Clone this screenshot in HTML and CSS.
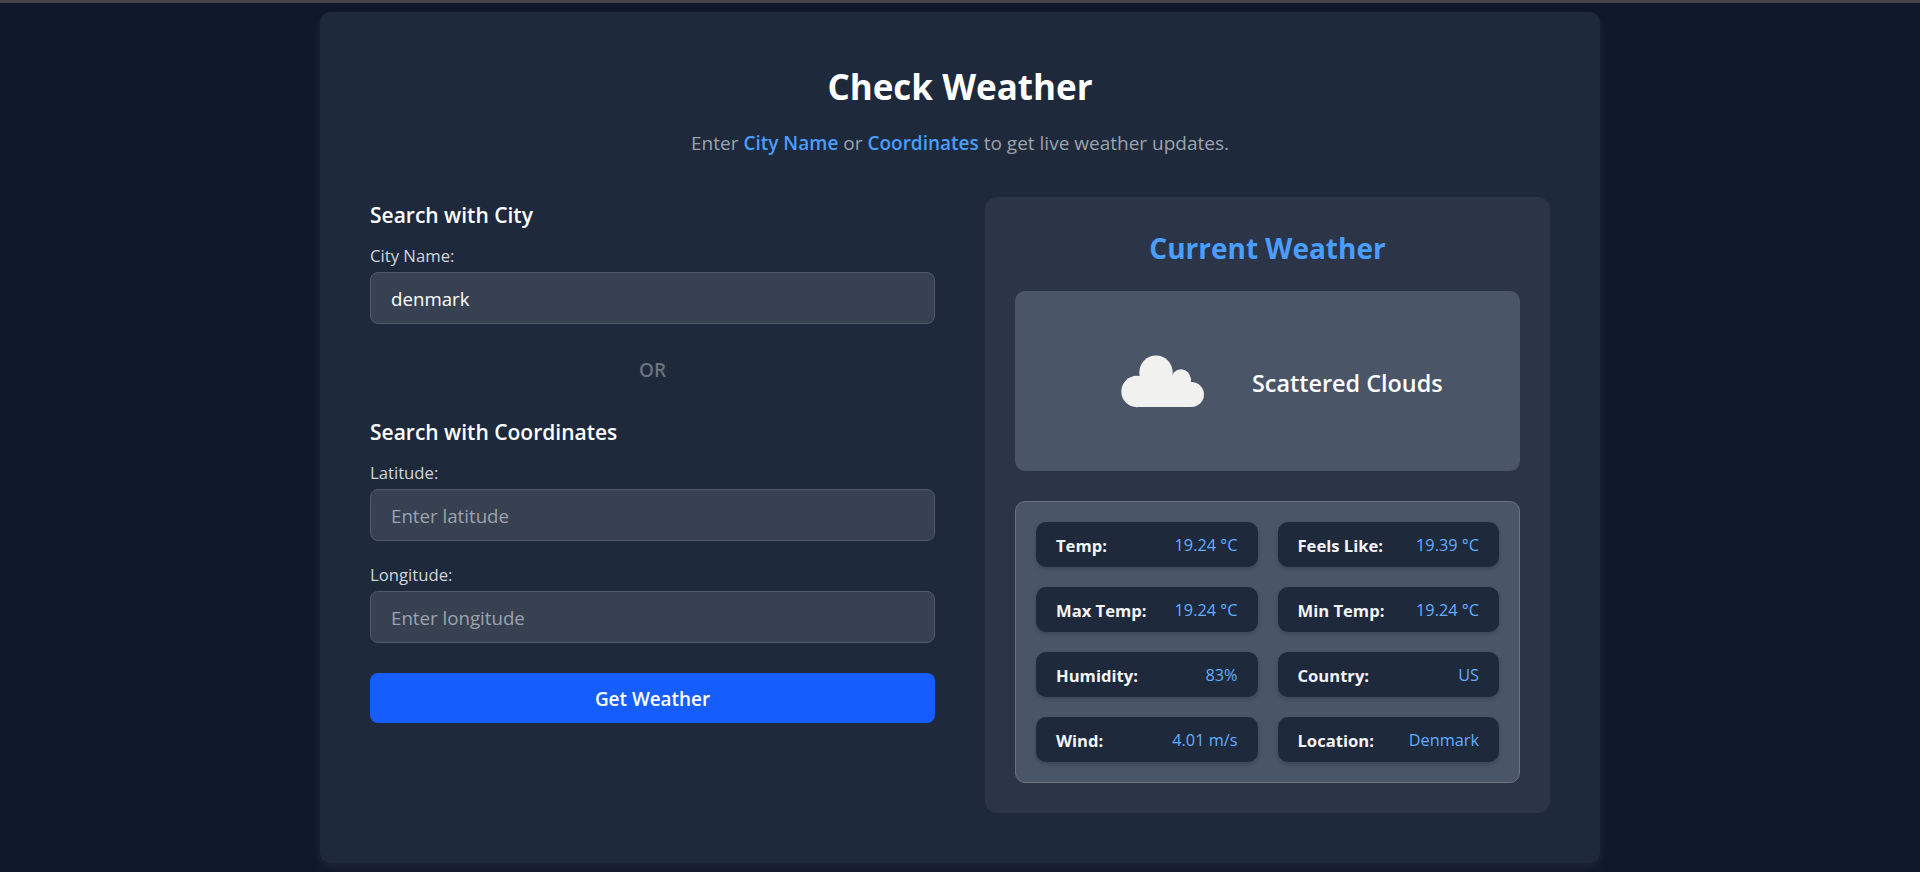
FILE: index.html
```html
<!DOCTYPE html>
<html lang="en">
<head>
    <meta charset="utf-8">
    <title>Check Weather</title>
    <link rel="stylesheet" href="styles.css">
</head>
<body>
    <div class="container">
        <h1 class="title">Check Weather</h1>
        <p class="subtitle">Enter <b>City Name</b> or <b>Coordinates</b> to get live weather updates.</p>

        <div class="columns">
            <form class="search">
                <h3>Search with City</h3>
                <label for="city">City Name:</label>
                <input type="text" id="city" value="denmark">

                <p class="or">OR</p>

                <h3>Search with Coordinates</h3>
                <label for="lat">Latitude:</label>
                <input type="text" id="lat" placeholder="Enter latitude">
                <label for="lon" class="second">Longitude:</label>
                <input type="text" id="lon" placeholder="Enter longitude">

                <button type="button" class="btn">Get Weather</button>
            </form>

            <div class="weather">
                <h2>Current Weather</h2>
                <div class="summary">
                    <svg class="cloud" width="100" height="100" viewBox="0 0 100 100">
                        <g fill="#f1f1ef">
                            <circle cx="43" cy="41.3" r="16.7"/>
                            <circle cx="68" cy="48" r="9.7"/>
                            <circle cx="24" cy="60.5" r="15.7"/>
                            <circle cx="78.5" cy="63.5" r="12.5"/>
                            <rect x="24" y="46" width="54" height="30" rx="2"/>
                        </g>
                    </svg>
                    <span class="desc">Scattered Clouds</span>
                </div>
                <div class="details">
                    <div class="item"><strong>Temp:</strong><span>19.24 °C</span></div>
                    <div class="item"><strong>Feels Like:</strong><span>19.39 °C</span></div>
                    <div class="item"><strong>Max Temp:</strong><span>19.24 °C</span></div>
                    <div class="item"><strong>Min Temp:</strong><span>19.24 °C</span></div>
                    <div class="item"><strong>Humidity:</strong><span>83%</span></div>
                    <div class="item"><strong>Country:</strong><span>US</span></div>
                    <div class="item"><strong>Wind:</strong><span>4.01 m/s</span></div>
                    <div class="item"><strong>Location:</strong><span>Denmark</span></div>
                </div>
            </div>
        </div>
    </div>
</body>
</html>
```

FILE: styles.css
```css
* {
    box-sizing: border-box;
}

body {
    margin: 0;
    height: 872px;
    overflow: hidden;
    background-color: #0f172a;
    border-top: 3px solid #444444;
    color: #fff;
    font-family: "Open Sans", "Noto Sans", sans-serif;
    font-stretch: 90%;
}

.container {
    width: 1280px;
    height: 851px;
    margin: 9px auto 0;
    padding: 50px;
    background-color: #1e293b;
    border-radius: 10px;
    box-shadow: 0 4px 12px rgba(255, 255, 255, 0.07);
}

.title {
    margin: 0;
    font-size: 35px;
    line-height: 50px;
    font-weight: 700;
    text-align: center;
}

.subtitle {
    margin: 19px 0 41px;
    font-size: 19px;
    line-height: 25px;
    color: #9ca3af;
    text-align: center;
}

.subtitle b {
    color: #4a9eff;
    font-weight: 600;
}

.columns {
    display: grid;
    grid-template-columns: 1fr 1fr;
    gap: 50px;
}

.search h3 {
    margin: 0 0 12px;
    font-size: 21px;
    line-height: 36px;
    font-weight: 600;
}

.search label {
    display: block;
    margin-bottom: 5px;
    font-size: 16.7px;
    line-height: 22px;
    color: #d1d5db;
}

.search label.second {
    margin-top: 23px;
}

.search input {
    display: block;
    width: 100%;
    height: 52px;
    padding: 0 20px;
    font: inherit;
    font-size: 18.7px;
    color: #fff;
    background-color: #374151;
    border: 1px solid #4f5b6b;
    border-radius: 8px;
    outline: none;
}

.search input::placeholder {
    color: #9ca3af;
}

.or {
    margin: 31px 0 29px;
    font-size: 19px;
    line-height: 30px;
    font-weight: 600;
    color: #6b7280;
    text-align: center;
}

.btn {
    display: block;
    width: 100%;
    height: 50px;
    margin-top: 30px;
    padding: 2px 0 0;
    font: inherit;
    font-size: 18.9px;
    font-weight: 600;
    color: #fff;
    background-color: #155dfc;
    border: none;
    border-radius: 8px;
}

.weather {
    padding: 30px;
    background-color: #2b3547;
    border-radius: 12px;
}

.weather h2 {
    margin: 0 0 22px;
    font-size: 28px;
    line-height: 42px;
    font-weight: 700;
    color: #4a9eff;
    text-align: center;
}

.summary {
    display: flex;
    align-items: center;
    gap: 39px;
    height: 180px;
    padding-left: 98px;
    background-color: #4a5568;
    border-radius: 10px;
}

.desc {
    padding-top: 3px;
    font-size: 23.4px;
    font-weight: 600;
}

.details {
    display: grid;
    grid-template-columns: 1fr 1fr;
    gap: 20px;
    margin-top: 30px;
    padding: 20px;
    background-color: #4a5568;
    border: 1px solid #6b7280;
    border-radius: 10px;
}

.item {
    display: flex;
    justify-content: space-between;
    align-items: center;
    height: 45px;
    padding: 1px 20px 0;
    font-size: 16.3px;
    background-color: #1e293b;
    border-radius: 10px;
    box-shadow: 0 2px 4px rgba(0, 0, 0, 0.2);
}

.item strong {
    font-size: 16.6px;
    font-weight: 700;
    color: #f3f4f6;
}

.item span {
    color: #63aeff;
}
```
